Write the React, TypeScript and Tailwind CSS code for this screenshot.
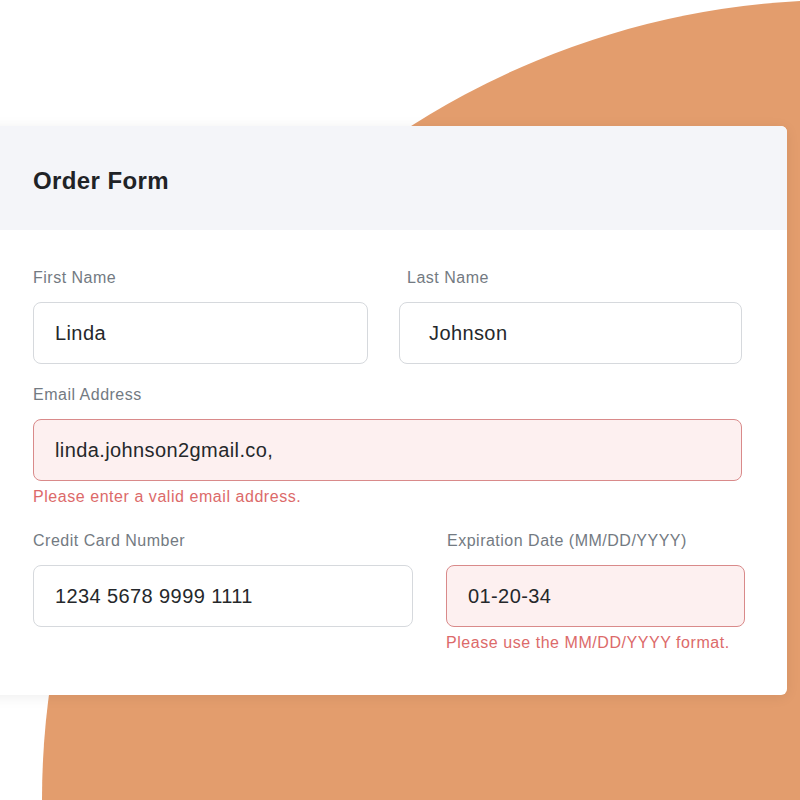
const font = { fontFamily: '"Liberation Sans", Arial, sans-serif' };

type FieldProps = {
  label: string;
  value: string;
  error?: string;
  className?: string;
  labelClass?: string;
  inputClass?: string;
};

function Field({ label, value, error, className = "", labelClass = "", inputClass = "" }: FieldProps) {
  return (
    <div className={className}>
      <div className={`h-5 text-[16px] leading-5 tracking-[0.5px] text-[#737a82] ${labelClass}`}>{label}</div>
      <div
        className={`mt-[14px] flex h-[62px] items-center rounded-lg border-[1.5px] text-[20px] tracking-[0.4px] text-[#25282b] ${
          error ? "border-[#d98a8a] bg-[#fdf0f0]" : "border-[#d6d9dd] bg-white"
        } ${inputClass}`}
      >
        {value}
      </div>
      {error && (
        <div className="mt-[6px] h-5 text-[16px] leading-5 tracking-[0.55px] text-[#dc6a6a]">{error}</div>
      )}
    </div>
  );
}

export default function App() {
  return (
    <div className="relative h-[800px] w-[800px] overflow-hidden bg-white" style={font}>
      {/* orange backdrop circle */}
      <div className="absolute left-[42px] top-0 h-[1600px] w-[1600px] rounded-full bg-[#e39d6d]" />

      <div className="relative -ml-[20px] mt-[126px] w-[807px] overflow-hidden rounded-r-md bg-white shadow-[0_2px_14px_rgba(0,0,0,0.07)]">
        <div className="flex h-[104px] items-center bg-[#f4f5f9] pl-[53px] pt-[6px]">
          <h1 className="text-[24px] font-bold tracking-[0.4px] text-[#1f2327]">Order Form</h1>
        </div>

        <div className="pb-[42px] pl-[53px] pt-[38px]">
          <div className="flex gap-[31px]">
            <Field label="First Name" value="Linda" className="w-[335px]" inputClass="pl-[21px]" />
            <Field
              label="Last Name"
              value="Johnson"
              className="w-[343px]"
              labelClass="pl-[8px]"
              inputClass="pl-[29px]"
            />
          </div>

          <Field
            label="Email Address"
            value="linda.johnson2gmail.co,"
            error="Please enter a valid email address."
            className="mt-[21px] w-[709px]"
            inputClass="pl-[21px]"
          />

          <div className="mt-[24px] flex gap-[33px]">
            <Field label="Credit Card Number" value="1234 5678 9999 1111" className="w-[380px]" inputClass="pl-[21px]" />
            <Field
              label="Expiration Date (MM/DD/YYYY)"
              value="01-20-34"
              error="Please use the MM/DD/YYYY format."
              className="w-[299px]"
              labelClass="pl-[1px]"
              inputClass="pl-[21px]"
            />
          </div>
        </div>
      </div>
    </div>
  );
}
